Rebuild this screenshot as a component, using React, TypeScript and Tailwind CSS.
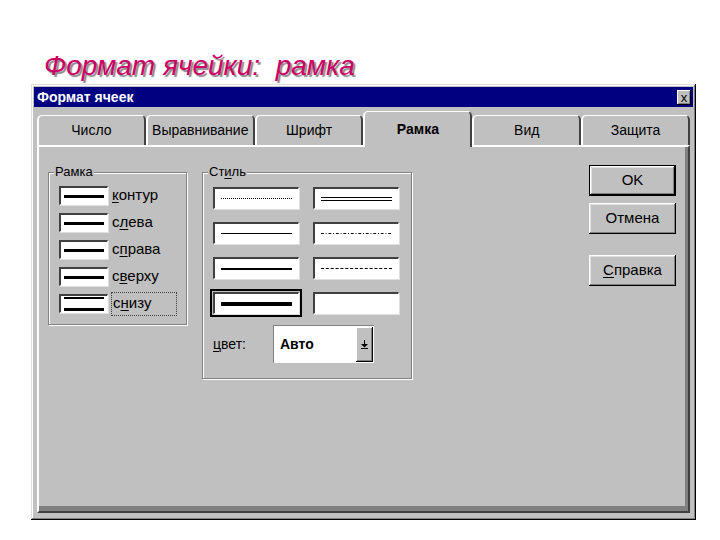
import React from "react";

const F = "font-['Liberation_Sans',Arial,sans-serif]";

function U({ children }: { children: React.ReactNode }) {
  return <span className="underline underline-offset-2 decoration-1">{children}</span>;
}

function Sunken({ className = "", children }: { className?: string; children?: React.ReactNode }) {
  return (
    <div
      className={
        "bg-white border-t-2 border-l-2 border-t-[#404040] border-l-[#404040] border-b border-r border-b-[#ffffff] border-r-[#ffffff] shadow-[1px_1px_0_#dfdfdf] flex items-center " +
        className
      }
    >
      {children}
    </div>
  );
}

function BorderPreview({ variant }: { variant: "mid" | "bottom" }) {
  return (
    <Sunken className="w-[49px] h-[19px] px-[3px]">
      {variant === "mid" ? (
        <div className="w-full h-[3px] bg-black" />
      ) : (
        <div className="w-full h-full flex flex-col justify-between py-[1px]">
          <div className="w-full h-[2px] bg-black" />
          <div className="w-full h-[3px] bg-black" />
        </div>
      )}
    </Sunken>
  );
}

function Line({ kind }: { kind: string }) {
  if (kind === "dotted")
    return <div className="w-full border-t border-dotted border-black" />;
  if (kind === "double")
    return (
      <div className="w-full flex flex-col gap-[2px]">
        <div className="w-full h-px bg-black" />
        <div className="w-full h-px bg-black" />
      </div>
    );
  if (kind === "thin") return <div className="w-full h-px bg-black" />;
  if (kind === "dashdot")
    return (
      <svg className="w-full h-px block" preserveAspectRatio="none" viewBox="0 0 76 1">
        <line x1="0" y1="0.5" x2="76" y2="0.5" stroke="black" strokeWidth="1" strokeDasharray="3 2 1 2" />
      </svg>
    );
  if (kind === "medium") return <div className="w-full h-[2px] bg-black" />;
  if (kind === "dashed")
    return <div className="w-full border-t border-dashed border-black" />;
  if (kind === "thick") return <div className="w-full h-[4px] bg-black" />;
  return null;
}

function StyleBox({ kind, selected }: { kind: string; selected?: boolean }) {
  const box = (
    <Sunken className="w-[86px] h-[22px] px-[6px]">
      <Line kind={kind} />
    </Sunken>
  );
  if (selected)
    return (
      <div className="border-2 border-black p-[1px] -m-[3px]">{box}</div>
    );
  return box;
}

function Button({ children, def }: { children: React.ReactNode; def?: boolean }) {
  const inner = (
    <div className="w-full h-full bg-[#c0c0c0] shadow-[inset_-1px_-1px_#000,inset_1px_1px_#fff,inset_-2px_-2px_#808080,inset_2px_2px_#dfdfdf] flex items-center justify-center text-[15px] text-black">
      {children}
    </div>
  );
  return (
    <div className={"w-[87px] h-[31px] " + (def ? "border border-black" : "")}>{inner}</div>
  );
}

function Tab({ label, selected }: { label: string; selected?: boolean }) {
  return (
    <div
      className={
        "w-[109px] flex items-center justify-center bg-[#c0c0c0] rounded-tl-[5px] rounded-tr-[5px] border-t border-l-2 border-r-2 border-t-white border-l-white border-r-[#404040] text-[14px] " +
        (selected
          ? "h-[36px] -mb-[2px] relative z-10 font-bold"
          : "h-[30px]")
      }
    >
      {label}
    </div>
  );
}

function Group({ title, className, children }: { title: React.ReactNode; className: string; children: React.ReactNode }) {
  return (
    <div
      className={
        "relative border border-[#808080] shadow-[inset_1px_1px_#fff,1px_1px_#fff] " + className
      }
    >
      <div className="absolute -top-[9px] left-[5px] bg-[#c0c0c0] px-[1px] text-[13px] leading-[16px]">
        {title}
      </div>
      {children}
    </div>
  );
}

export default function App() {
  const borders: [React.ReactNode, "mid" | "bottom", boolean?][] = [
    [<><U>к</U>онтур</>, "mid"],
    [<>с<U>л</U>ева</>, "mid"],
    [<>с<U>п</U>рава</>, "mid"],
    [<>с<U>в</U>ерху</>, "mid"],
    [<>с<U>н</U>изу</>, "bottom", true],
  ];
  return (
    <div className={"w-[720px] h-[540px] bg-white overflow-hidden " + F}>
      <div className="h-[84px] pl-[44px] pt-[50px]">
        <div className="text-[28px] leading-[32px] italic text-[#cc0066] whitespace-pre [text-shadow:2px_2px_1px_#8a8a8a]">
          Формат ячейки:  рамка
        </div>
      </div>
      <div className="ml-[31px] w-[665px] h-[436px] bg-[#c0c0c0] p-[3px] shadow-[inset_-1px_-1px_#000,inset_1px_1px_#dfdfdf,inset_-2px_-2px_#808080,inset_2px_2px_#fff] flex flex-col">
        <div className="h-[20px] bg-[#000080] flex items-center justify-between pl-[3px] pr-[2px]">
          <span className="text-white font-bold text-[14px]">Формат ячеек</span>
          <div className="w-[14px] h-[15px] bg-[#c0c0c0] shadow-[inset_-1px_-1px_#000,inset_1px_1px_#fff,inset_-2px_-2px_#808080] flex items-center justify-center text-[13px] leading-none text-black">
            x
          </div>
        </div>
        <div className="flex-1 flex flex-col px-[3px] pt-[4px] pb-[4px]">
          <div className="flex items-end h-[34px]">
            <Tab label="Число" />
            <Tab label="Выравнивание" />
            <Tab label="Шрифт" />
            <Tab label="Рамка" selected />
            <Tab label="Вид" />
            <Tab label="Защита" />
          </div>
          <div className="flex-1 border-t-2 border-l-2 border-t-white border-l-white border-r-2 border-b-2 border-r-[#404040] border-b-[#404040] shadow-[inset_-3px_-5px_#808080] flex items-start pl-[9px] pr-[12px]">
            <Group title="Рамка" className="mt-[25px] w-[139px] h-[153px]">
              <div className="flex flex-col gap-[8px] pl-[10px] pt-[13px]">
                {borders.map(([label, v, focus], i) => (
                  <div key={i} className="flex items-center h-[19px]">
                    <BorderPreview variant={v} />
                    <div
                      className={
                        "ml-[3px] text-[15px] px-[1px] " +
                        (focus ? "border border-dotted border-[#404040] w-[66px] h-[24px] flex items-center" : "")
                      }
                    >
                      {label}
                    </div>
                  </div>
                ))}
              </div>
            </Group>
            <Group title={<>Ст<U>и</U>ль</>} className="mt-[25px] ml-[15px] w-[210px] h-[207px]">
              <div className="grid grid-cols-[86px_86px] gap-x-[14px] gap-y-[13px] pl-[10px] pt-[14px]">
                <StyleBox kind="dotted" />
                <StyleBox kind="double" />
                <StyleBox kind="thin" />
                <StyleBox kind="dashdot" />
                <StyleBox kind="medium" />
                <StyleBox kind="dashed" />
                <StyleBox kind="thick" selected />
                <StyleBox kind="none" />
              </div>
              <div className="flex items-center pl-[10px] mt-[11px]">
                <span className="text-[14px] w-[60px]">
                  <U>ц</U>вет:
                </span>
                <div className="w-[101px] h-[38px] bg-white flex items-stretch border-t border-l border-t-[#808080] border-l-[#808080]">
                  <div className="flex-1 flex items-center pl-[6px] text-[14px] font-bold">Авто</div>
                  <div className="w-[17px] my-[1px] mr-[1px] bg-[#c0c0c0] shadow-[inset_-1px_-1px_#000,inset_1px_1px_#fff,inset_-2px_-2px_#808080] flex items-center justify-center">
                    <svg width="7" height="9" viewBox="0 0 7 9">
                      <path d="M3 0h1v4h3L3.5 7.5 0 4h3z" fill="black" />
                      <rect x="0" y="8" width="7" height="1" fill="black" />
                    </svg>
                  </div>
                </div>
              </div>
            </Group>
            <div className="ml-auto mt-[18px] flex flex-col">
              <Button def>OK</Button>
              <div className="h-[7px]" />
              <Button>Отмена</Button>
              <div className="h-[21px]" />
              <Button>
                <span>
                  <U>С</U>правка
                </span>
              </Button>
            </div>
          </div>
        </div>
      </div>
    </div>
  );
}
